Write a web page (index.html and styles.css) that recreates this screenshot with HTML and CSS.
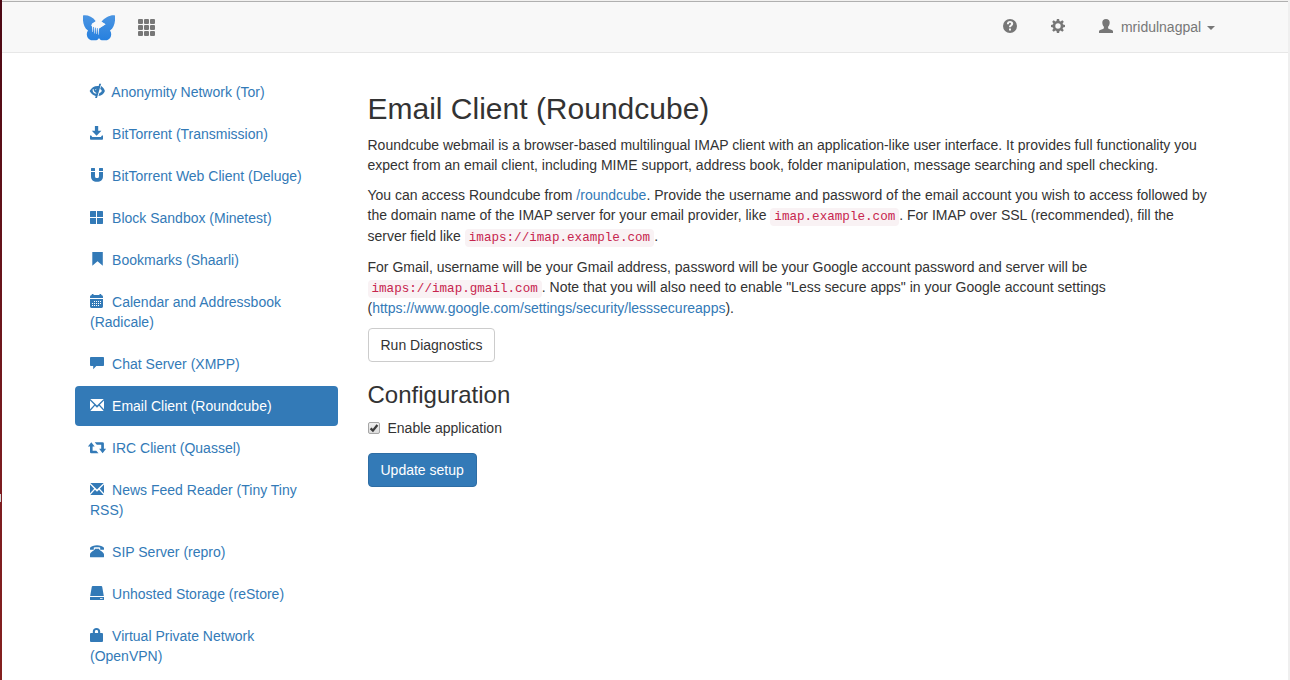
FILE: index.html
```html
<!DOCTYPE html>
<html lang="en">
<head>
<meta charset="utf-8">
<title>Email Client (Roundcube)</title>
<link rel="stylesheet" href="styles.css">
</head>
<body>
<div class="edge"><span class="edge-handle"></span></div>
<div class="window">
<header class="navbar">
  <div class="container navbar-row">
    <a class="brand"><svg class="logo" viewBox="0 0 32 26"><defs><linearGradient id="wing" x1="0" y1="0" x2="0" y2="1"><stop offset="0" stop-color="#4b95e2"/><stop offset="1" stop-color="#2680df"/></linearGradient></defs><path fill="url(#wing)" d="M0 .4C4-.4 9.500 1.500 12.800 6.200L9 8.500 8.200 11 16 13.500 22.500 9.200 18.500 6.800C22 2 28-.4 32 .4C32.500 6 31.500 12.500 27 15.600C29.500 19 28 24 24 25.300H18.800C17.500 25 16.500 24 16 23C15.500 24 14.500 25 13.200 25.300H8C4 24 2.500 19 5 15.600C.5 12.500-.5 6 0 .4Z"/><path fill="#f8f8f8" d="M12.800 6.200l1.400.9h3.600l.7-.3 4 2.400-6.500 4.300-.3 6.300h-.5l-.3-6.800h-.6l-.3 6h-.5l-.5-6.600h-.7l-.3 6h-.5l-.5-6.600h-.7l-.3 5.300h-.5l-.6-6.800z"/></svg></a>
    <svg class="apps" viewBox="0 0 17 17"><path d="M0 1q0-1 1-1h3q1 0 1 1v3q0 1-1 1H1q-1 0-1-1zM6 1q0-1 1-1h3q1 0 1 1v3q0 1-1 1H7q-1 0-1-1zM12 1q0-1 1-1h3q1 0 1 1v3q0 1-1 1h-3q-1 0-1-1zM0 7q0-1 1-1h3q1 0 1 1v3q0 1-1 1H1q-1 0-1-1zM6 7q0-1 1-1h3q1 0 1 1v3q0 1-1 1H7q-1 0-1-1zM12 7q0-1 1-1h3q1 0 1 1v3q0 1-1 1h-3q-1 0-1-1zM0 13q0-1 1-1h3q1 0 1 1v3q0 1-1 1H1q-1 0-1-1zM6 13q0-1 1-1h3q1 0 1 1v3q0 1-1 1H7q-1 0-1-1zM12 13q0-1 1-1h3q1 0 1 1v3q0 1-1 1h-3q-1 0-1-1z"/></svg>
    <nav class="navbar-right">
      <a><svg class="icon" viewBox="0 0 14 14"><path fill-rule="evenodd" d="M7 0a7 7 0 1 1 0 14A7 7 0 0 1 7 0zM3.900 5.200h2c0-1 .4-1.400 1.100-1.400.6 0 1 .3 1 .9 0 1.200-2 1.100-2 3.600h2c0-1.400 2.200-1.400 2.200-3.600C10.200 3 8.900 2.100 7.100 2.100 5.100 2.100 3.900 3.300 3.900 5.200zM6 9.400v2.100h2V9.400z"/></svg></a>
      <a><svg class="icon" viewBox="0 0 14 14"><path fill-rule="evenodd" d="M5.900 0h2.200l.4 2 1.100.5 1.700-1.200 1.500 1.500-1.200 1.700.5 1.100 1.900.4v2.100l-1.900.4-.5 1.100 1.200 1.700-1.500 1.500-1.700-1.200-1.100.5-.4 1.900H5.900l-.4-1.900-1.100-.5-1.700 1.200-1.500-1.500 1.200-1.700-.5-1.100L0 8.100V6l1.900-.4.5-1.100-1.200-1.700 1.500-1.500 1.700 1.200L5.500 2zM7 4.300a2.700 2.700 0 1 0 0 5.400 2.700 2.700 0 0 0 0-5.400z"/></svg></a>
      <a><svg class="icon" viewBox="0 0 14 14"><path d="M7 0c2.400 0 3.700 1.300 3.700 3.400 0 1.900-.7 3.500-1.600 4.400v1c0 .6.300.8 1 1.100l2.800 1.200c.8.400 1.100.8 1.100 1.500V14H0v-1.400c0-.7.3-1.100 1.100-1.500l2.800-1.200c.7-.3 1-.5 1-1.100v-1C4 6.900 3.300 5.300 3.300 3.400 3.300 1.300 4.600 0 7 0z"/></svg>&nbsp; mridulnagpal <span class="caret"></span></a>
    </nav>
  </div>
</header>
<div class="container page">
  <ul class="sidebar">
    <li><a><svg class="icon" viewBox="0 0 14 14"><path d="M9.200-.2h1.900L7 14H5.100l.6-2.100C3 11.500 1.100 9.500-.4 7.100 1.600 3.500 4.600 1.600 8.700 2z"/><path d="M11.100 2.100c1.700 1 3 2.700 3.800 4.900-1.100 2.700-3.300 4.700-6.400 5l.8-2.700c1.200-.5 2-1.300 2.600-2.300-.4-.9-.9-1.500-1.700-2z"/><path class="cut" d="M2.700 5.200C2.100 7.500 3.500 9.300 6.200 9.700l.2-.7C4.600 8.500 3.500 7 3.600 5.100zM5.300 5.300l1.200-.6-.8 1.900z"/></svg>&nbsp; Anonymity Network (Tor)</a></li>
    <li><a><svg class="icon" viewBox="0 0 14 14"><path d="M4.900 0h3.300v4.800h3.200L6.600 9.700 1.800 4.800h3.100zM0 9.600h1.200l1 1.300h8.700l1-1.300H13V13q0 .8-.8.800H.8q-.8 0-.8-.8z"/></svg>&nbsp; BitTorrent (Transmission)</a></li>
    <li><a><svg class="icon" viewBox="0 0 14 14"><path d="M1 .5Q1 0 1.500 0h3Q5 0 5 .5V3H1zM9 .5Q9 0 9.500 0h3q.5 0 .5.500V3H9zM1 4h4v3.900c0 1.500.7 2.200 2 2.200s2-.7 2-2.200V4h4v4.200c0 3.600-2.300 5.600-6 5.600S1 11.800 1 8.200z"/></svg>&nbsp; BitTorrent Web Client (Deluge)</a></li>
    <li><a><svg class="icon" viewBox="0 0 14 14"><path d="M.7 1H6v6H0V1.700Q0 1 .7 1zM7 1h5.300q.7 0 .7.700V7H7zM0 8h6v6H.7Q0 14 0 13.300zM7 8h6v5.300q0 .7-.7.700H7z"/></svg>&nbsp; Block Sandbox (Minetest)</a></li>
    <li><a><svg class="icon" viewBox="0 0 14 14"><path d="M2.300 0h10.500v13.700L7.500 9.300l-5.200 4.400z"/></svg>&nbsp; Bookmarks (Shaarli)</a></li>
    <li><a><svg class="icon" viewBox="0 0 14 14"><path fill-rule="evenodd" d="M1.800 0h1.700v1h6V0h1.700v1q1.800 0 1.800 1.700V4H0V2.700Q0 1 1.800 1zM0 5h13v7.600q0 1.400-1.400 1.400H1.400Q0 14 0 12.600zM4 7v1h1V7zM6 7v1h1V7zM8 7v1h1V7zM10 7v1h1V7zM2 9v1h1V9zM4 9v1h1V9zM6 9v1h1V9zM8 9v1h1V9zM10 9v1h1V9zM2 11v1h1v-1zM4 11v1h1v-1zM6 11v1h1v-1zM8 11v1h1v-1z"/></svg>&nbsp; Calendar and Addressbook (Radicale)</a></li>
    <li><a><svg class="icon" viewBox="0 0 14 14"><path d="M1 1h12.200q.8 0 .8.800v7.400q0 .8-.8.800H6.300L3.200 13.200V10H1q-1 0-1-.8V1.800Q0 1 1 1z"/></svg>&nbsp; Chat Server (XMPP)</a></li>
    <li class="active"><a><svg class="icon" viewBox="0 0 14 14"><path d="M.3 1h13.400L7 7.500zM0 2.600l4.200 4.200L0 11.200zM14 2.600v8.600L9.800 6.800zM5 7.700l2 2 2-2 4.700 5.300H.3z"/></svg>&nbsp; Email Client (Roundcube)</a></li>
    <li><a><svg class="icon" viewBox="0 0 14 14"><path d="M1.300 2.200l3.400 4.200H2.600v4.300h3.700l2.200 2.500H1.200q-1.200 0-1.200-1.200V6.400h-2.100zM4.700 2.200h7.800q1.400 0 1.400 1.300v5.300h2.200l-3.500 4.400-3.500-4.400h2.100V4.700H6.800z"/></svg>&nbsp; IRC Client (Quassel)</a></li>
    <li><a><svg class="icon" viewBox="0 0 14 14"><path d="M.3 1h13.400L7 7.500zM0 2.600l4.200 4.200L0 11.200zM14 2.600v8.600L9.800 6.800zM5 7.700l2 2 2-2 4.700 5.300H.3z"/></svg>&nbsp; News Feed Reader (Tiny Tiny RSS)</a></li>
    <li><a><svg class="icon" viewBox="0 0 14 14"><path d="M0 5.300V3.800C2.300.3 11.700.3 14 3.800v1.500q0 .5-.5.500h-2.800q-.5 0-.5-.5V3.600C8.400 3 5.600 3 3.800 3.600v1.700q0 .5-.5.500H.5Q0 5.800 0 5.300zM5 4.800h4c.2 2 4.900 3.100 5 5.600v2.300q0 .6-.6.600H.6q-.6 0-.6-.6v-2.300c.1-2.500 4.800-3.600 5-5.600z"/></svg>&nbsp; SIP Server (repro)</a></li>
    <li><a><svg class="icon" viewBox="0 0 14 14"><path fill-rule="evenodd" d="M2.700 0h8.600q.7 0 .9.700L13.800 10H.2L1.800.7Q2 0 2.700 0zM0 11h14v2.500q0 .5-.5.500H.5q-.5 0-.5-.5zM10 12v.8h2.600V12z"/></svg>&nbsp; Unhosted Storage (reStore)</a></li>
    <li><a><svg class="icon" viewBox="0 0 14 14"><path fill-rule="evenodd" d="M2.800 5V3.500C2.800 1.200 4.300 0 6.500 0s3.700 1.200 3.700 3.500V5H12q1 0 1 1v7q0 1-1 1H1q-1 0-1-1V6q0-1 1-1zM4.900 5h3.200V3.600C8.100 2.500 7.500 2 6.500 2s-1.600.5-1.600 1.600z"/></svg>&nbsp; Virtual Private Network (OpenVPN)</a></li>
  </ul>
  <main class="content">
    <h2>Email Client (Roundcube)</h2>
    <p>Roundcube webmail is a browser-based multilingual IMAP client with an application-like user interface. It provides full functionality you expect from an email client, including MIME support, address book, folder manipulation, message searching and spell checking.</p>
    <p>You can access Roundcube from <a>/roundcube</a>. Provide the username and password of the email account you wish to access followed by the domain name of the IMAP server for your email provider, like <code>imap.example.com</code>. For IMAP over SSL (recommended), fill the server field like <code>imaps://imap.example.com</code>.</p>
    <p>For Gmail, username will be your Gmail address, password will be your Google account password and server will be <code>imaps://imap.gmail.com</code>. Note that you will also need to enable "Less secure apps" in your Google account settings (<a>https://www.google.com/settings/security/lesssecureapps</a>).</p>
    <button class="btn">Run Diagnostics</button>
    <h3>Configuration</h3>
    <label class="check"><svg class="checkbox" viewBox="0 0 12 12"><defs><linearGradient id="box" x1="0" y1="0" x2="0" y2="1"><stop offset="0" stop-color="#f0f0f0"/><stop offset="1" stop-color="#dcdcdc"/></linearGradient></defs><rect x=".5" y=".5" width="11" height="11" rx="1.500" fill="url(#box)" stroke="#a6a6a6"/><path d="M2.600 6.400l2.300 2.200L9.400 3" fill="none" stroke="#3c3c3c" stroke-width="2.300"/></svg>Enable application</label>
    <button class="btn btn-primary">Update setup</button>
  </main>
</div>
</div>
</body>
</html>
```
FILE: styles.css
```css
* { box-sizing: border-box; }
body {
  margin: 0;
  height: 680px;
  overflow: hidden;
  display: flex;
  font: 14px/1.42857143 "Liberation Sans", Arial, sans-serif;
  color: #333;
  background: #fff;
}
a { color: #337ab7; text-decoration: none; }
.edge {
  width: 2px;
  padding-top: 494px;
  background: linear-gradient(#4c0814, #7c1c20 70%, #84201f);
}
.edge-handle { display: block; width: 1px; height: 8px; background: #d2d2d2; }
.window {
  flex: 1;
  border-top: 1px solid #f2f1f0;
  border-right: 2px solid #efefef;
}
.container { width: 1170px; margin: 0 auto; padding: 0 15px; }
.navbar {
  height: 52px;
  background: #f8f8f8;
  border-top: 1px solid #b0b0b0;
  border-bottom: 1px solid #e7e7e7;
}
.navbar-row { display: flex; align-items: flex-start; }
.brand { padding: 13px 0 0 8px; height: 50px; }
.logo { display: block; width: 32px; height: 26px; }
.apps { width: 17px; height: 17px; margin: 17px 0 0 23px; fill: #777; }
.navbar-right { margin-left: auto; display: flex; gap: 34px; padding-top: 15px; }
.navbar-right a { color: #777; }
.icon {
  display: inline-block;
  width: 14px;
  height: 14px;
  vertical-align: -1px;
  fill: currentColor;
  overflow: visible;
}
.icon .cut { fill: #fff; }
.caret {
  display: inline-block;
  margin-left: 2px;
  vertical-align: middle;
  border-top: 4px solid;
  border-right: 4px solid transparent;
  border-left: 4px solid transparent;
}
.page { display: flex; gap: 30px; padding-top: 19px; }
.sidebar { width: 262.5px; flex: none; margin: 0; padding: 0; list-style: none; }
.sidebar li + li { margin-top: 2px; }
.sidebar a { display: block; padding: 10px 15px; border-radius: 4px; }
.sidebar .icon { margin-right: 0.3px; }
.sidebar .active a { color: #fff; background: #337ab7; }
.content { flex: 1; min-width: 0; padding-top: 20px; }
h2, h3 { font-weight: 500; line-height: 1.1; margin: 0 0 10px; }
h2 { font-size: 30px; }
h3 { font-size: 24px; margin-top: 20px; }
p { margin: 0 0 10px; }
code {
  font-family: "Liberation Mono", "Courier New", monospace;
  font-size: 90%;
  line-height: 17px;
  padding: 2px 4px;
  color: #c7254e;
  background: #f9f2f4;
  border-radius: 4px;
}
.btn {
  display: block;
  font: inherit;
  color: #333;
  padding: 6px 12px;
  border: 1px solid #ccc;
  border-radius: 4px;
  background: #fff;
}
.btn-primary { color: #fff; background: #337ab7; border-color: #2e6da4; }
.check { display: flex; gap: 7.5px; margin-bottom: 15px; }
.checkbox { width: 12px; height: 12px; margin: 4px 0 0 0.5px; }
```
